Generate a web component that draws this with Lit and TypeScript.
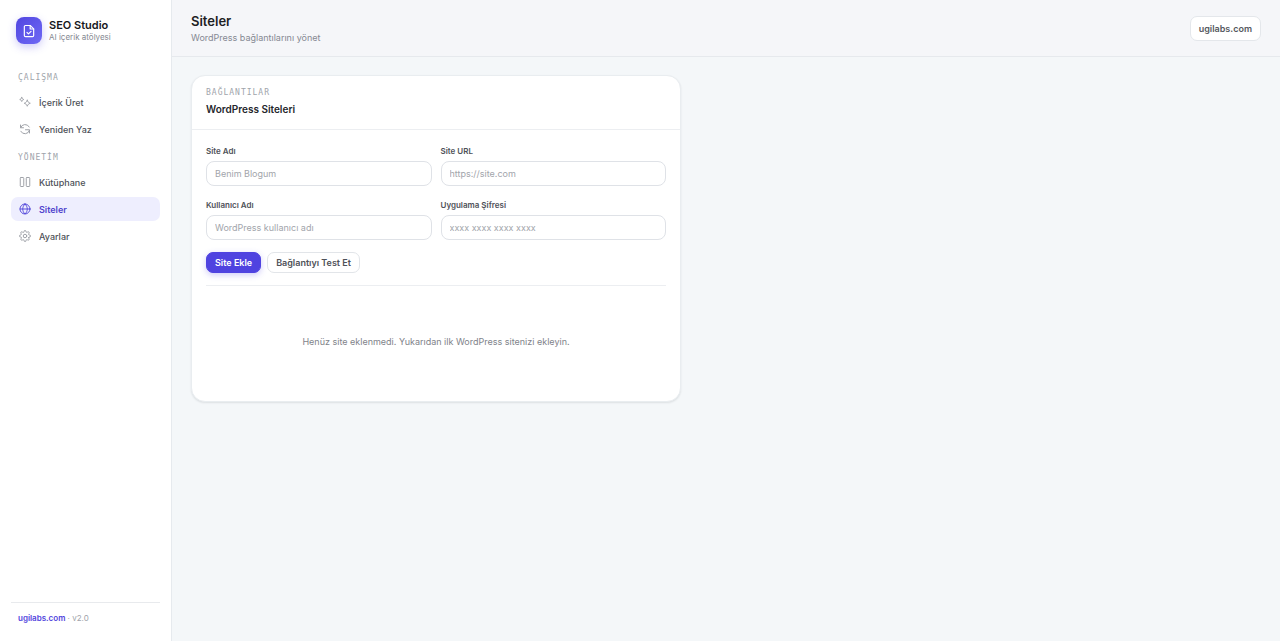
import { LitElement, html, svg, css, type TemplateResult } from "lit";
import { customElement, property, state } from "lit/decorators.js";
import { classMap } from "lit/directives/class-map.js";

const icons: Record<string, TemplateResult> = {
  sparkles: svg`<path d="M5.500 3c.6 2.200 1.600 3.200 4 4-2.400.8-3.400 1.800-4 4-.6-2.200-1.600-3.200-4-4 2.400-.8 3.400-1.800 4-4z"/><path d="M16.500 8.500c1.200 3.500 2.500 4.800 6 6-3.500 1.200-4.800 2.500-6 6-1.200-3.500-2.500-4.800-6-6 3.500-1.200 4.800-2.500 6-6z"/>`,
  refresh: svg`<path d="M3 4v5.500h6M3.200 9.500A9.500 9.500 0 0 1 20.500 8"/><path d="M13 13.500h8V20M21 14.500A9.500 9.500 0 0 1 3.500 16.500"/>`,
  library: svg`<rect x="2.500" y="3" width="7" height="18" rx="1.500"/><rect x="14.500" y="3" width="7" height="18" rx="1.500"/>`,
  globe: svg`<circle cx="12" cy="12" r="10"/><path d="M2 12h20M12 2c3 2.800 4.500 6.300 4.500 10S15 19.200 12 22c-3-2.800-4.500-6.300-4.500-10S9 4.800 12 2z"/>`,
  gear: svg`<circle cx="12" cy="12" r="3.500"/><path d="M19.400 15a1.650 1.650 0 0 0 .33 1.820l.06.06a2 2 0 1 1-2.830 2.830l-.06-.06a1.650 1.650 0 0 0-2.800 1.170V21a2 2 0 0 1-4 0v-.09a1.650 1.650 0 0 0-2.900-1.080l-.06.06a2 2 0 1 1-2.830-2.830l.06-.06A1.650 1.650 0 0 0 3.200 14H3a2 2 0 0 1 0-4h.09a1.650 1.650 0 0 0 1.080-2.900l-.06-.06a2 2 0 1 1 2.830-2.830l.06.06A1.650 1.650 0 0 0 10 3.200V3a2 2 0 0 1 4 0v.09a1.650 1.650 0 0 0 2.900 1.080l.06-.06a2 2 0 1 1 2.830 2.830l-.06.06A1.650 1.650 0 0 0 20.900 10H21a2 2 0 0 1 0 4h-.09a1.650 1.650 0 0 0-1.510 1z"/>`,
  doc: svg`<path d="M14 2.500H6a2 2 0 0 0-2 2v15a2 2 0 0 0 2 2h12a2 2 0 0 0 2-2V8.500z"/><path d="M14 2.500v6h6M8.500 14.500l2.500 2.500 4.500-4.500"/>`,
};

const icon = (name: string) =>
  html`<svg class="icon" viewBox="0 0 24 24" aria-hidden="true">${icons[name]}</svg>`;

@customElement("app-sidebar")
class AppSidebar extends LitElement {
  @property() active = "Siteler";

  private groups = [
    { title: "ÇALIŞMA", items: [["sparkles", "İçerik Üret"], ["refresh", "Yeniden Yaz"]] },
    { title: "YÖNETİM", items: [["library", "Kütüphane"], ["globe", "Siteler"], ["gear", "Ayarlar"]] },
  ];

  static styles = css`
    :host {
      display: flex;
      flex-direction: column;
      box-sizing: border-box;
      padding: 17px 11px 17px;
      background: #fff;
      border-right: 1px solid #e6eaee;
    }
    .icon {
      width: 12px;
      height: 12px;
      fill: none;
      stroke: currentColor;
      stroke-width: 2;
      stroke-linecap: round;
      stroke-linejoin: round;
      overflow: visible;
    }
    .brand {
      display: flex;
      align-items: center;
      gap: 7px;
      padding: 0 5px;
      margin-bottom: 28px;
    }
    .logo {
      display: grid;
      place-items: center;
      width: 26px;
      height: 27px;
      border-radius: 8px;
      color: #fff;
      background: linear-gradient(135deg, #5146e0, #6f69f5);
      box-shadow: 0 3px 8px rgba(79, 70, 229, 0.28);
    }
    .logo .icon {
      width: 14px;
      height: 14px;
    }
    .name {
      font-size: 11px;
      line-height: 13px;
      font-weight: 600;
      color: #17181c;
    }
    .tag {
      font-size: 8px;
      line-height: 10px;
      color: #858991;
    }
    .group {
      padding: 0 7px;
      margin: 0 0 6px;
      font: 400 8px/12px "DejaVu Sans Mono", monospace;
      letter-spacing: 1px;
      color: #a0a4ab;
    }
    ul {
      list-style: none;
      margin: 0 0 11px;
      padding: 0;
      display: grid;
      gap: 3px;
    }
    .item {
      display: flex;
      align-items: center;
      gap: 8px;
      height: 24px;
      padding: 0 8px;
      border-radius: 7px;
      font-size: 9px;
      font-weight: 500;
      color: #4e5158;
      text-decoration: none;
    }
    .item .icon {
      color: #a0a3a9;
    }
    .item.on {
      background: #eeeefe;
      color: #5145cd;
      font-weight: 600;
    }
    .item.on .icon {
      color: #5a4fdc;
    }
    .foot {
      margin-top: auto;
      padding: 9px 7px 0;
      border-top: 1px solid #e8eaed;
      font-size: 8px;
      line-height: 12px;
      color: #a0a3aa;
    }
    .foot a {
      color: #5145dd;
      font-weight: 600;
      text-decoration: none;
    }
  `;

  render() {
    return html`
      <div class="brand">
        <div class="logo">${icon("doc")}</div>
        <div>
          <div class="name">SEO Studio</div>
          <div class="tag">AI içerik atölyesi</div>
        </div>
      </div>
      <nav>
        ${this.groups.map(
          (g) => html`
            <p class="group">${g.title}</p>
            <ul>
              ${g.items.map(
                ([glyph, label]) => html`<li>
                  <a href="#" class=${classMap({ item: true, on: label === this.active })}>${icon(glyph)}${label}</a>
                </li>`
              )}
            </ul>
          `
        )}
      </nav>
      <div class="foot"><a href="#">ugilabs.com</a> · v2.0</div>
    `;
  }
}

@customElement("sites-card")
class SitesCard extends LitElement {
  @state() private fields = [
    { id: "name", label: "Site Adı", hint: "Benim Blogum", type: "text" },
    { id: "url", label: "Site URL", hint: "https://site.com", type: "url" },
    { id: "user", label: "Kullanıcı Adı", hint: "WordPress kullanıcı adı", type: "text" },
    { id: "pass", label: "Uygulama Şifresi", hint: "xxxx xxxx xxxx xxxx", type: "password" },
  ];

  static styles = css`
    :host {
      display: block;
      box-sizing: border-box;
      max-width: 490px;
      background: #fff;
      border: 1px solid #e9edf0;
      border-radius: 14px;
      box-shadow: 0 1px 2px rgba(20, 25, 40, 0.1);
    }
    header {
      padding: 11px 14px 12px;
      border-bottom: 1px solid #eceef1;
    }
    .eyebrow {
      margin: 0;
      font: 400 8px/12px "DejaVu Sans Mono", monospace;
      letter-spacing: 1px;
      color: #a0a4ab;
    }
    h2 {
      margin: 2px 0 0;
      font-size: 10px;
      line-height: 16px;
      font-weight: 600;
      color: #25272c;
    }
    .body {
      padding: 15px 14px;
    }
    .fields {
      display: grid;
      grid-template-columns: 1fr 1fr;
      gap: 13px 9px;
    }
    label {
      display: block;
      margin-bottom: 4px;
      font-size: 8px;
      line-height: 12px;
      font-weight: 600;
      color: #4e5158;
    }
    input {
      display: block;
      box-sizing: border-box;
      width: 100%;
      height: 25px;
      padding: 0 8px;
      border: 1px solid #dfe2e7;
      border-radius: 8px;
      background: #fff;
      font: 400 9px "Inter", sans-serif;
      color: #25272c;
      outline-color: #5145dd;
    }
    input::placeholder {
      color: #a2a5ab;
      opacity: 1;
    }
    .actions {
      display: flex;
      gap: 6px;
      margin-top: 12px;
      padding-bottom: 12px;
      border-bottom: 1px solid #eceef1;
    }
    button {
      height: 21px;
      padding: 0 8px;
      border: 1px solid #e2e5e9;
      border-radius: 7px;
      background: #fff;
      color: #4e5158;
      font: 600 9px "Inter", sans-serif;
    }
    .primary {
      border-color: #4f43e0;
      background: #4f43e0;
      color: #fff;
      box-shadow: 0 2px 6px rgba(79, 70, 229, 0.28);
    }
    .empty {
      margin: 0;
      padding: 49px 0 37px;
      text-align: center;
      font-size: 9px;
      line-height: 14px;
      color: #7f838a;
    }
  `;

  render() {
    return html`
      <header>
        <p class="eyebrow">BAĞLANTILAR</p>
        <h2>WordPress Siteleri</h2>
      </header>
      <div class="body">
        <form @submit=${(e: Event) => e.preventDefault()}>
          <div class="fields">
            ${this.fields.map(
              (f) => html`<div>
                <label for=${f.id}>${f.label}</label>
                <input id=${f.id} type=${f.type} placeholder=${f.hint} />
              </div>`
            )}
          </div>
          <div class="actions">
            <button class="primary" type="submit">Site Ekle</button>
            <button type="button">Bağlantıyı Test Et</button>
          </div>
        </form>
        <p class="empty">Henüz site eklenmedi. Yukarıdan ilk WordPress sitenizi ekleyin.</p>
      </div>
    `;
  }
}

@customElement("app-root")
class AppRoot extends LitElement {
  static styles = css`
    :host {
      display: grid;
      grid-template-columns: 172px 1fr;
      min-height: 100vh;
      font-family: "Inter", sans-serif;
      background: #f4f7f9;
    }
    .top {
      display: flex;
      align-items: center;
      justify-content: space-between;
      padding: 12px 19px 11px;
      border-bottom: 1px solid #e6e9ed;
      background: #f5f6f9;
    }
    h1 {
      margin: 0;
      font-size: 13px;
      line-height: 18px;
      font-weight: 600;
      color: #1d1e23;
    }
    .sub {
      margin: 1px 0;
      font-size: 9px;
      line-height: 13px;
      color: #868993;
    }
    .pill {
      padding: 5px 8px;
      border: 1px solid #e4e7eb;
      border-radius: 7px;
      background: #fff;
      font-size: 9px;
      line-height: 13px;
      font-weight: 600;
      color: #555960;
      text-decoration: none;
    }
    .content {
      padding: 18px 19px;
    }
  `;

  render() {
    return html`
      <app-sidebar></app-sidebar>
      <main>
        <div class="top">
          <div>
            <h1>Siteler</h1>
            <p class="sub">WordPress bağlantılarını yönet</p>
          </div>
          <a class="pill" href="#">ugilabs.com</a>
        </div>
        <div class="content"><sites-card></sites-card></div>
      </main>
    `;
  }
}
